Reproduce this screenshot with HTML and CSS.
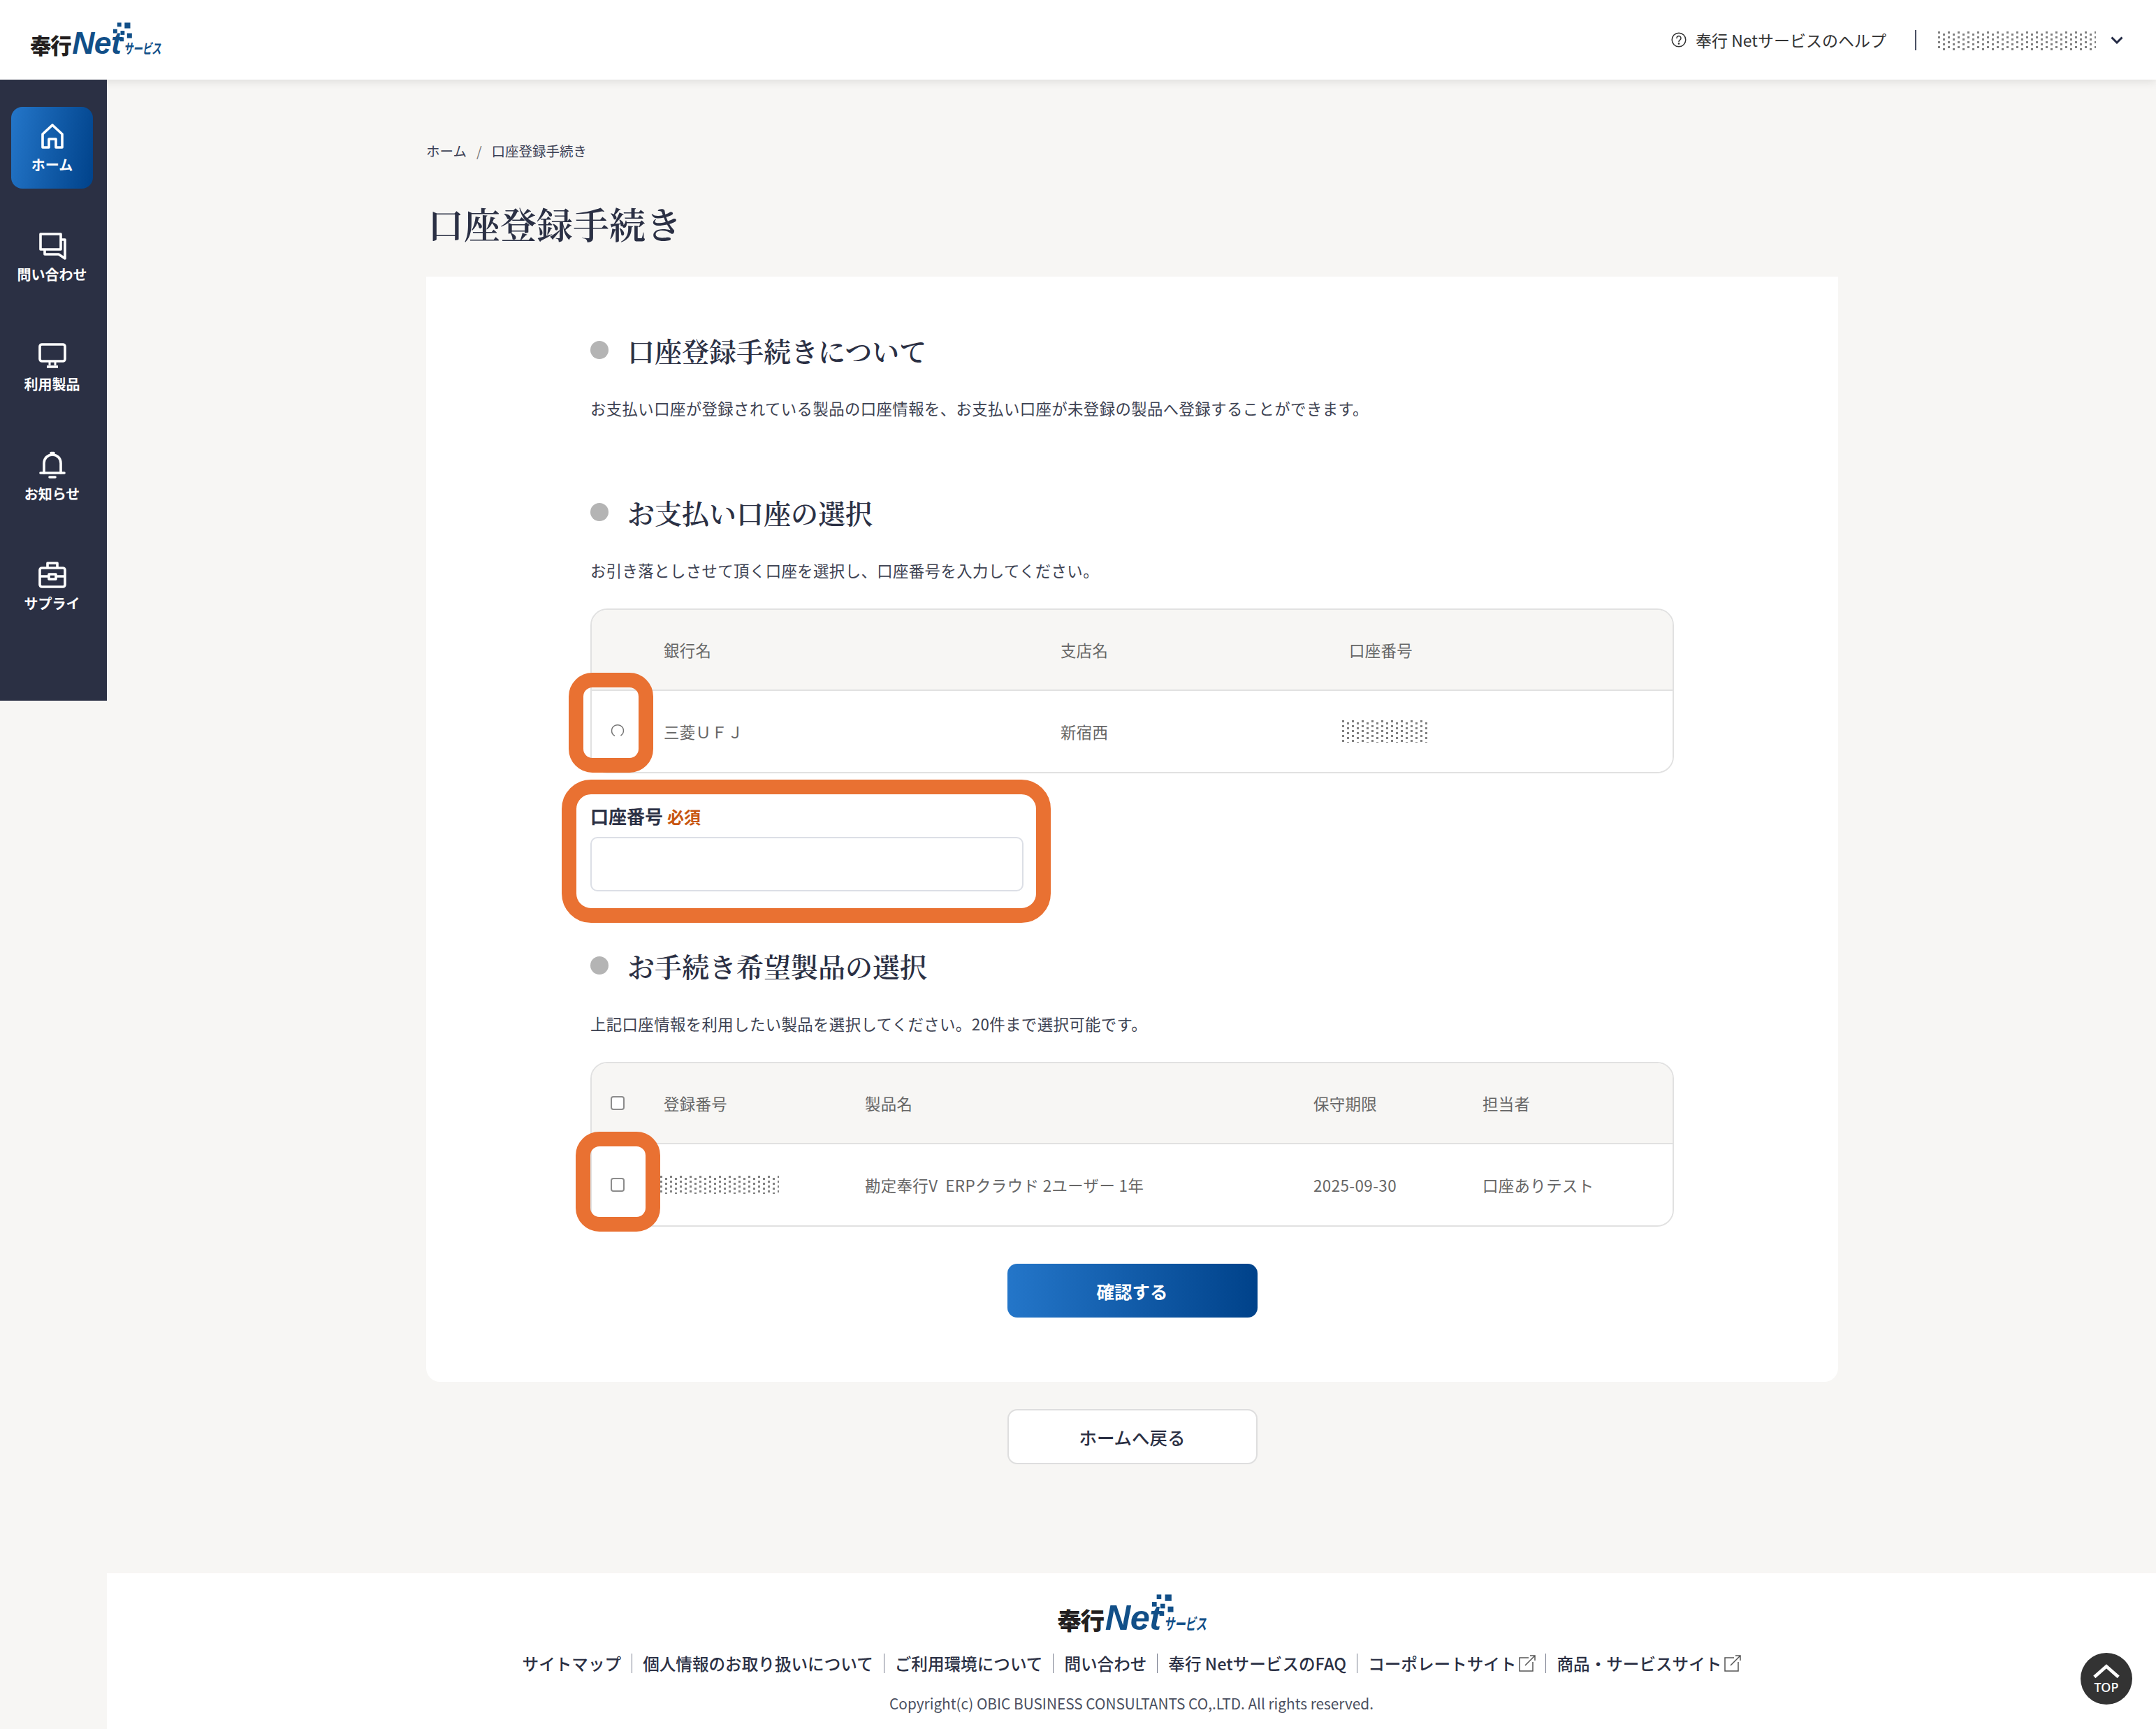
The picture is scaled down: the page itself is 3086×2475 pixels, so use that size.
FILE: index.html
```html
<!DOCTYPE html>
<html lang="ja">
<head>
<meta charset="utf-8">
<title>口座登録手続き</title>
<link rel="stylesheet" href="styles.css">
</head>
<body>
<header class="topbar">
  <a class="logo logo-top">
    <span class="logo-ja">奉行</span><span class="logo-net">Net</span><span class="logo-sub">サービス</span>
    <svg class="logo-dots" viewBox="0 0 24 24"><g fill="#114f88"><rect x="5" y="0" width="5" height="5"/><rect x="14" y="0" width="7" height="7"/><rect x="0" y="8" width="5" height="5"/><rect x="9" y="10" width="5" height="5"/><rect x="17" y="13" width="6" height="6"/><rect x="8" y="18" width="5" height="5"/></g></svg>
  </a>
  <div class="top-right">
    <a class="help">
      <svg class="help-icon" viewBox="0 0 22 22" fill="none" stroke="#333" stroke-width="1.5"><circle cx="11" cy="11" r="9.8"/><path d="M8 8.6a3 3 0 1 1 4.6 2.5c-1 .7-1.6 1.2-1.6 2.5" stroke-linecap="round"/><circle cx="11" cy="16.4" r=".6" fill="#333"/></svg>
      <span>奉行 Netサービスのヘルプ</span>
    </a>
    <span class="top-divider"></span>
    <span class="dither dither-user"></span>
    <svg class="chevron" viewBox="0 0 18 11" fill="none" stroke="#232a44" stroke-width="3"><path d="M1.5 1.5 9 9l7.500-7.500"/></svg>
  </div>
</header>

<div class="shell">
  <nav class="sidebar">
    <a class="nav-item nav-active">
      <svg class="nav-icon" viewBox="0 0 40 40" fill="none" stroke="#fff" stroke-width="3.600" stroke-linejoin="round"><path d="M6 17 20 4l14 13v19H25V24h-10v12H6z"/></svg>
      <span>ホーム</span>
    </a>
    <a class="nav-item">
      <svg class="nav-icon" viewBox="0 0 40 40" fill="none" stroke="#fff" stroke-width="3.600" stroke-linejoin="round"><path d="M3 3h29v22H3z"/><path d="M32 11h6v27l-9-6H9v-7"/></svg>
      <span>問い合わせ</span>
    </a>
    <a class="nav-item">
      <svg class="nav-icon" viewBox="0 0 40 40" fill="none" stroke="#fff" stroke-width="3.600" stroke-linejoin="round"><rect x="2" y="4" width="36" height="24" rx="3"/><path d="M16 29v5M24 29v5" stroke-width="3"/><path d="M12 36h16" stroke-width="3.600"/></svg>
      <span>利用製品</span>
    </a>
    <a class="nav-item">
      <svg class="nav-icon" viewBox="0 0 40 40" fill="none" stroke="#fff" stroke-width="3.600" stroke-linecap="round" stroke-linejoin="round"><path d="M8 31V17c0-7 5-12 12-12s12 5 12 12v14"/><path d="M3 31h34"/><path d="M18 2.500h4" /><path d="M16 37h8"/></svg>
      <span>お知らせ</span>
    </a>
    <a class="nav-item">
      <svg class="nav-icon" viewBox="0 0 40 40" fill="none" stroke="#fff" stroke-width="3.600" stroke-linejoin="round"><rect x="2" y="10" width="36" height="27" rx="3"/><path d="M13 10V3h14v7"/><path d="M2 22h12M26 22h12"/><rect x="15" y="19" width="10" height="7"/></svg>
      <span>サプライ</span>
    </a>
  </nav>

  <div class="content-column">
    <main class="content">
      <div class="breadcrumb"><a>ホーム</a><span class="crumb-sep">/</span><span>口座登録手続き</span></div>
      <h1 class="page-title">口座登録手続き</h1>

      <div class="card">
        <section class="section section-first">
          <h2 class="section-title">口座登録手続きについて</h2>
          <p class="section-text">お支払い口座が登録されている製品の口座情報を、お支払い口座が未登録の製品へ登録することができます。</p>
        </section>

        <section class="section section-second">
          <h2 class="section-title">お支払い口座の選択</h2>
          <p class="section-text">お引き落としさせて頂く口座を選択し、口座番号を入力してください。</p>
          <div class="table table-bank">
            <div class="row row-head">
              <span></span><span>銀行名</span><span>支店名</span><span>口座番号</span>
            </div>
            <div class="row row-body">
              <span class="cell-check"><svg class="radio" viewBox="0 0 20 20" fill="none" stroke="#777" stroke-width="1.500"><path d="M6 17.300A8.200 8.200 0 0 1 6 2.700 8.600 8.600 0 0 1 14 2.700 8.200 8.200 0 0 1 14.500 17"/></svg></span>
              <span>三菱ＵＦＪ</span><span>新宿西</span><span><i class="dither dither-acct"></i></span>
            </div>
          </div>
          <label class="field">
            <span class="field-label">口座番号<em class="required">必須</em></span>
            <input class="text-input" type="text">
          </label>
          <span class="mark mark-radio"></span>
          <span class="mark mark-field"></span>
        </section>

        <section class="section section-third">
          <h2 class="section-title">お手続き希望製品の選択</h2>
          <p class="section-text">上記口座情報を利用したい製品を選択してください。20件まで選択可能です。</p>
          <div class="table table-product">
            <div class="row row-head">
              <span class="cell-check"><i class="checkbox"></i></span><span>登録番号</span><span>製品名</span><span>保守期限</span><span>担当者</span>
            </div>
            <div class="row row-body">
              <span class="cell-check"><i class="checkbox"></i></span><span><i class="dither dither-reg"></i></span><span>勘定奉行V&nbsp; ERPクラウド 2ユーザー 1年</span><span>2025-09-30</span><span>口座ありテスト</span>
            </div>
          </div>
          <span class="mark mark-check"></span>
        </section>

        <div class="actions"><a class="btn btn-primary">確認する</a></div>
      </div>

      <div class="actions-back"><a class="btn btn-secondary">ホームへ戻る</a></div>
    </main>

    <footer class="footer">
      <a class="logo logo-foot">
        <span class="logo-ja">奉行</span><span class="logo-net">Net</span><span class="logo-sub">サービス</span>
        <svg class="logo-dots" viewBox="0 0 24 24"><g fill="#114f88"><rect x="5" y="0" width="5" height="5"/><rect x="14" y="0" width="7" height="7"/><rect x="0" y="8" width="5" height="5"/><rect x="9" y="10" width="5" height="5"/><rect x="17" y="13" width="6" height="6"/><rect x="8" y="18" width="5" height="5"/></g></svg>
      </a>
      <ul class="footer-links">
        <li>サイトマップ</li>
        <li>個人情報のお取り扱いについて</li>
        <li>ご利用環境について</li>
        <li>問い合わせ</li>
        <li>奉行 NetサービスのFAQ</li>
        <li>コーポレートサイト<svg class="ext" viewBox="0 0 26 26" fill="none" stroke="#555" stroke-width="1.500"><path d="M15 5H2v19h19V11"/><path d="M10 16 24 2M17 2h7v7"/></svg></li>
        <li>商品・サービスサイト<svg class="ext" viewBox="0 0 26 26" fill="none" stroke="#555" stroke-width="1.500"><path d="M15 5H2v19h19V11"/><path d="M10 16 24 2M17 2h7v7"/></svg></li>
      </ul>
      <p class="copyright">Copyright(c) OBIC BUSINESS CONSULTANTS CO,.LTD. All rights reserved.</p>
      <a class="to-top">
        <svg viewBox="0 0 44 22" fill="none" stroke="#fff" stroke-width="5"><path d="M4 20 22 4l18 16"/></svg>
        <span>TOP</span>
      </a>
    </footer>
  </div>
</div>
</body>
</html>
```

FILE: styles.css
```css
* { box-sizing: border-box; }
html, body { margin: 0; height: 100%; }
body {
  display: flex;
  flex-direction: column;
  min-height: 2475px;
  background: #f7f6f4;
  color: #2b3044;
  font-family: "Noto Sans CJK JP", "Noto Sans", sans-serif;
  font-size: 22px;
  overflow: hidden;
}
a { color: inherit; text-decoration: none; }
i, em { font-style: normal; }

/* top bar */
.topbar {
  flex: none;
  height: 114px;
  display: flex;
  align-items: center;
  justify-content: space-between;
  padding: 0 47px 0 43px;
  background: #fff;
  box-shadow: 0 3px 12px rgba(0,0,0,.1);
  position: relative;
  z-index: 1;
}
.logo {
  position: relative;
  display: inline-flex;
  align-items: baseline;
  line-height: 1;
  white-space: nowrap;
}
.logo-top { font-size: 16px; margin-top: 11px; }
.logo-foot { font-size: 18.200px; }
.logo-ja {
  font-size: 1.900em;
  font-weight: 900;
  color: #231f20;
  letter-spacing: -.04em;
}
.logo-net {
  font-family: "Liberation Sans", sans-serif;
  font-size: 2.780em;
  font-weight: 700;
  font-style: italic;
  color: #114f88;
  margin-left: .04em;
  letter-spacing: -.01em;
}
.logo-sub {
  display: inline-block;
  font-size: 1.250em;
  font-weight: 700;
  font-style: italic;
  color: #114f88;
  letter-spacing: -.02em;
  margin-left: .2em;
  transform: scaleX(.68);
  transform-origin: 0 100%;
  margin-right: -1.300em;
}
.logo-dots {
  position: absolute;
  width: 1.750em;
  height: 1.800em;
  left: 7.450em;
  top: -.500em;
}
.top-right { display: flex; align-items: center; }
.help { display: flex; align-items: center; gap: 13px; color: #333; font-size: 23px; }
.help-icon { width: 22px; height: 22px; }
.top-divider { width: 2px; height: 29px; background: #4a5064; margin: 0 31px 0 41px; }
.dither {
  display: block;
  --d: #808080;
  background-image:
    conic-gradient(from 0deg at 3px 3px, transparent 75%, var(--d) 0),
    conic-gradient(from 0deg at 3px 3px, transparent 75%, var(--d) 0),
    conic-gradient(from 0deg at 3px 3px, transparent 75%, var(--d) 0),
    conic-gradient(from 0deg at 3px 3px, transparent 75%, var(--d) 0);
  background-size: 14px 14px;
  background-position: 0 0, 7px 3px, 0 7px, 7px 10px;
}
.dither-user { width: 226px; height: 28px; margin-top: 3px; }
.chevron { width: 18px; height: 11px; margin-left: 21px; }

/* shell */
.shell { flex: 1; display: flex; min-height: 0; }
.sidebar {
  flex: none;
  align-self: flex-start;
  width: 153px;
  height: 889px;
  background: #2b3044;
  padding: 39px 16px 0;
  display: flex;
  flex-direction: column;
  gap: 40px;
  position: relative;
  z-index: 2;
}
.nav-item {
  height: 117px;
  width: 117px;
  border-radius: 16px;
  display: flex;
  flex-direction: column;
  align-items: center;
  justify-content: center;
  color: #fff;
  font-size: 20px;
  font-weight: 700;
  line-height: 1.2;
  white-space: nowrap;
  gap: 9px;
}
.nav-icon { width: 40px; height: 40px; }
.nav-active {
  background: linear-gradient(100deg, #2476c9 0%, #00428a 100%);
}

/* content */
.content-column { flex: 1; min-width: 0; display: flex; flex-direction: column; }
.content { flex: 1; width: 2021px; margin-left: 457px; }
.breadcrumb {
  display: flex;
  align-items: center;
  height: 28px;
  margin-top: 87px;
  font-size: 19.500px;
  color: #3b4054;
}
.crumb-sep { margin: 0 14px; color: #777; }
.page-title {
  margin: 0;
  padding: 53px 0 0 2px;
  height: 167px;
  font-family: "Noto Serif CJK JP", "Noto Sans CJK JP", serif;
  font-size: 52px;
  font-weight: 600;
  line-height: 76px;
  color: #2b3044;
}
.card {
  height: 1582px;
  background: #fff;
  border-radius: 0 0 20px 20px;
  padding: 0 235px;
  position: relative;
}
.section { position: relative; }
.section-first { padding-top: 76px; }
.section-second { padding-top: 104px; }
.section-third { padding-top: 77px; }
.section-title {
  margin: 0;
  padding-left: 53px;
  height: 58px;
  position: relative;
  font-family: "Noto Serif CJK JP", "Noto Sans CJK JP", serif;
  font-size: 39px;
  font-weight: 600;
  line-height: 58px;
  color: #2b3044;
}
.section-title::before {
  content: "";
  position: absolute;
  left: 0;
  top: 16px;
  width: 26px;
  height: 26px;
  border-radius: 50%;
  background: #b4b4b4;
}
.section-text {
  margin: 38px 0 0;
  height: 32px;
  font-size: 22.400px;
  line-height: 32px;
  letter-spacing: .4px;
  color: #3d4252;
}
.section-second .table { margin-top: 39px; }
.section-third .table { margin-top: 39px; }
.table {
  border: 2px solid #e1e1e1;
  border-radius: 24px;
  overflow: hidden;
  color: #666;
  font-size: 22.400px;
  letter-spacing: .4px;
}
.row {
  display: grid;
  align-items: center;
  height: 116px;
}
.table-bank .row { grid-template-columns: 103px 568px 413px 1fr; }
.table-product .row { grid-template-columns: 103px 288px 642px 242px 1fr; }
.row-head { background: #f7f6f4; border-bottom: 2px solid #e1e1e1; }
.row-body { background: #fff; }
.cell-check { display: flex; padding-left: 27px; }
.checkbox {
  display: block;
  width: 20px;
  height: 20px;
  border: 2px solid #8c8c8c;
  border-radius: 4px;
  background: #fff;
}
.radio { width: 20px; height: 20px; margin-top: -2px; }
.dither-acct { width: 122px; height: 32px; margin-left: -10px; }
.dither-reg { width: 170px; height: 26px; margin-left: -5px; }
.field { display: block; margin-top: 42px; }
.field-label {
  display: block;
  height: 40px;
  font-size: 26px;
  font-weight: 700;
  line-height: 38px;
  color: #2b3044;
}
.required { color: #c8560f; font-size: 24px; margin-left: 6px; font-weight: 700; }
.text-input {
  display: block;
  width: 620px;
  height: 78px;
  margin-top: 9px;
  border: 2px solid #dcdfe6;
  border-radius: 10px;
  background: #fff;
}
.mark {
  position: absolute;
  border: 21px solid #e97132;
  pointer-events: none;
}
.mark-radio { left: -31px; top: 363px; width: 121px; height: 143px; border-radius: 34px; }
.mark-field { left: -41px; top: 516px; width: 700px; height: 205px; border-radius: 42px; }
.mark-check { left: -21px; top: 344px; width: 121px; height: 143px; border-radius: 34px; }
.actions { position: absolute; left: 0; right: 0; top: 1413px; display: flex; justify-content: center; }
.actions-back { display: flex; justify-content: center; margin-top: 39px; }
.btn {
  display: flex;
  align-items: center;
  justify-content: center;
  width: 358px;
  border-radius: 14px;
  font-size: 25.500px;
  font-weight: 700;
}
.btn-primary { height: 77px; color: #fff; background: linear-gradient(90deg, #2476c9 0%, #00428a 100%); }
.btn-secondary { height: 79px; color: #2b3044; background: #fff; border: 2px solid #dedede; font-weight: 500; }

/* footer */
.footer {
  flex: none;
  position: relative;
  height: 223px;
  background: #fff;
  display: flex;
  flex-direction: column;
  align-items: center;
  padding-top: 39px;
}
.footer-links {
  list-style: none;
  margin: 25px 0 0;
  padding: 0;
  display: flex;
  align-items: center;
  font-size: 23.600px;
  font-weight: 500;
  line-height: 32px;
  color: #2b3044;
}
.footer-links li { display: flex; align-items: center; padding: 0 15px; border-left: 1px solid #7b8090; height: 28px; line-height: 28px; }
.footer-links li:first-child { border-left: 0; }
.ext { width: 26px; height: 26px; margin-left: 3px; margin-right: -2px; }
.copyright { margin: 28px 0 0; font-size: 20.800px; line-height: 30px; color: #4a4f60; }
.to-top {
  position: absolute;
  right: 34px;
  top: 114px;
  width: 74px;
  height: 74px;
  border-radius: 50%;
  background: #333;
  color: #fff;
  display: flex;
  flex-direction: column;
  align-items: center;
  padding-top: 15px;
  gap: 1px;
  font-family: "Noto Sans", sans-serif;
  font-size: 18px;
  font-weight: 500;
  line-height: 22px;
}
.to-top svg { width: 42px; height: 22px; }
```
